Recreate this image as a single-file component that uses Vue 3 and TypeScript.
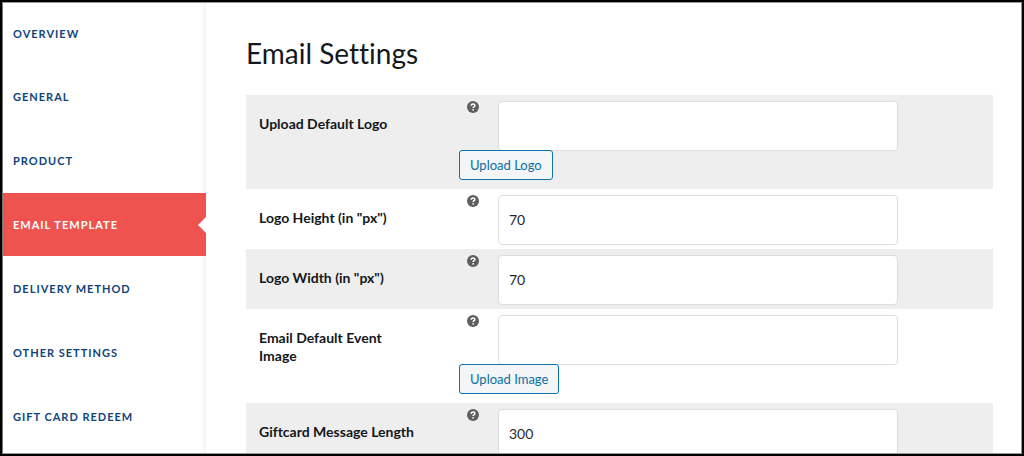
<script setup lang="ts">
import { ref } from 'vue'

interface Field {
  id: string
  label: string
  value: string
  action?: string
}

const tabs: string[] = [
  'Overview',
  'General',
  'Product',
  'Email Template',
  'Delivery Method',
  'Other Settings',
  'Gift Card Redeem',
]
const active = ref('Email Template')

const fields = ref<Field[]>([
  { id: 'default-logo', label: 'Upload Default Logo', value: '', action: 'Upload Logo' },
  { id: 'logo-height', label: 'Logo Height (in "px")', value: '70' },
  { id: 'logo-width', label: 'Logo Width (in "px")', value: '70' },
  { id: 'event-image', label: 'Email Default Event Image', value: '', action: 'Upload Image' },
  { id: 'message-length', label: 'Giftcard Message Length', value: '300' },
])
</script>

<template>
  <div class="frame">
    <div class="layout">
      <nav class="sidebar">
        <a
          v-for="tab in tabs"
          :key="tab"
          href="#"
          class="tab"
          :class="{ active: tab === active }"
          @click.prevent="active = tab"
        >{{ tab }}</a>
      </nav>
      <main class="content">
        <h1>Email Settings</h1>
        <table class="settings">
          <tbody>
            <tr v-for="field in fields" :key="field.id" :class="{ tall: field.action }">
              <th scope="row"><label :for="field.id">{{ field.label }}</label></th>
              <td>
                <div class="control">
                  <svg class="help" viewBox="0 0 12 12" aria-hidden="true">
                    <circle cx="6" cy="6" r="6" fill="#5f5f5f" />
                    <path d="M4.2 4.7C4.2 3.5 5 2.9 6.1 2.9C7.2 2.9 7.9 3.5 7.9 4.4C7.9 5.6 6.1 5.6 6.1 7" fill="none" stroke="#fff" stroke-width="1.5" />
                    <circle cx="6.1" cy="8.8" r="0.9" fill="#fff" />
                  </svg>
                  <input :id="field.id" v-model="field.value" type="text" />
                </div>
                <button v-if="field.action" type="button">{{ field.action }}</button>
              </td>
            </tr>
          </tbody>
        </table>
      </main>
    </div>
  </div>
</template>

<style>
body {
  margin: 0;
}
</style>

<style scoped>
.frame {
  box-sizing: border-box;
  height: 100vh;
  border: 2px solid #000;
  overflow: hidden;
  background: #fff;
  color: #14171c;
  font-family: Lato, "Liberation Sans", sans-serif;
  font-variant-ligatures: none;
}

.layout {
  box-sizing: border-box;
  display: flex;
  height: 100%;
  overflow: hidden;
  border: 1px solid #999;
  border-left-color: #777;
}

.sidebar {
  flex: 0 0 203px;
  background: linear-gradient(to left, #f3f3f3, #fff 6px);
}

.tab {
  position: relative;
  display: flex;
  align-items: center;
  box-sizing: border-box;
  height: 63px;
  margin-bottom: 1px;
  padding-left: 10px;
  color: #0f4478;
  font-size: 11px;
  font-weight: 700;
  letter-spacing: 1px;
  text-decoration: none;
  text-transform: uppercase;
}

.tab:first-child {
  height: 61px;
}

.tab.active {
  background: #ef5350;
  color: #fff;
}

.tab.active::after {
  content: "";
  position: absolute;
  right: 0;
  top: 50%;
  margin-top: -8px;
  border: 8px solid transparent;
  border-left-width: 0;
  border-right-color: #fff;
}

.content {
  flex: 1;
  min-width: 0;
  padding: 32px 28px 0 40px;
}

h1 {
  margin: 0 0 24px;
  font-size: 28px;
  line-height: 36px;
  font-weight: 400;
}

.settings {
  width: 100%;
  border-collapse: collapse;
}

tr:nth-child(odd) {
  background: #eee;
}

th {
  box-sizing: border-box;
  width: 200px;
  padding: 20px 30px 4px 13px;
  vertical-align: top;
  text-align: left;
  font-size: 14px;
  line-height: 18px;
  font-weight: 700;
}

td {
  padding: 6px 13px 4px;
  vertical-align: top;
}

.tall td {
  padding-bottom: 9px;
}

.control {
  display: flex;
  align-items: flex-start;
  gap: 19px;
  padding-left: 8px;
}

.help {
  flex: none;
  width: 12px;
  height: 12px;
}

input {
  box-sizing: border-box;
  flex: 0 1 400px;
  min-width: 0;
  height: 50px;
  padding: 0 10px 2px;
  border: 1px solid #ddd;
  border-radius: 4px;
  background: #fff;
  color: #24282d;
  font: 400 14px Lato, "Liberation Sans", sans-serif;
}

button {
  position: relative;
  display: block;
  box-sizing: border-box;
  height: 30px;
  margin: -1px 0 0;
  padding: 0 10px;
  border: 1px solid #0b76ab;
  border-radius: 3px;
  background: #f3f5f6;
  color: #0b6fa4;
  font: 400 13px Lato, "Liberation Sans", sans-serif;
}
</style>
